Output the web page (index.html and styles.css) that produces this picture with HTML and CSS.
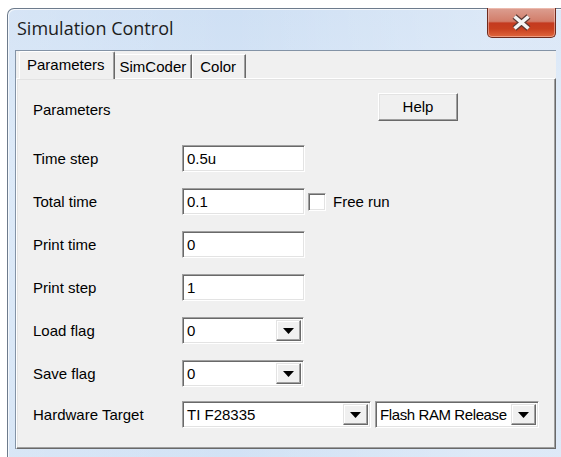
FILE: index.html
```html
<!DOCTYPE html>
<html lang="en">
<head>
<meta charset="utf-8">
<title>Simulation Control</title>
<link rel="stylesheet" href="styles.css">
</head>
<body>
  <div class="window">
    <div class="titlebar">
      <span class="title">Simulation Control</span>
      <button class="close" aria-label="Close">
        <svg width="21" height="17" viewBox="0 0 21 17">
          <path d="M3.5 2.5 L17.5 14.5 M17.5 2.5 L3.5 14.5" stroke="#5b3a34" stroke-width="6" fill="none"/>
          <path d="M3.5 2.5 L17.5 14.5 M17.5 2.5 L3.5 14.5" stroke="#f4f4f4" stroke-width="3.6" fill="none"/>
        </svg>
      </button>
    </div>

    <div class="client">
      <div class="tabs">
        <div class="tab active">Parameters</div>
        <div class="tab">SimCoder</div>
        <div class="tab tab-last">Color</div>
      </div>

      <div class="panel">
        <div class="head">
          <span class="head-title">Parameters</span>
          <button class="btn">Help</button>
        </div>

        <div class="form">
          <div class="row">
            <span class="label">Time step</span>
            <div class="field">0.5u</div>
          </div>
          <div class="row">
            <span class="label">Total time</span>
            <div class="field">0.1</div>
            <span class="check"></span>
            <span class="check-label">Free run</span>
          </div>
          <div class="row">
            <span class="label">Print time</span>
            <div class="field">0</div>
          </div>
          <div class="row">
            <span class="label">Print step</span>
            <div class="field">1</div>
          </div>
          <div class="row">
            <span class="label">Load flag</span>
            <div class="combo">
              <span class="value">0</span>
              <span class="arrow"><svg width="11" height="6" viewBox="0 0 11 6"><path d="M0 0 H11 L5.5 6 Z" fill="#000"/></svg></span>
            </div>
          </div>
          <div class="row">
            <span class="label">Save flag</span>
            <div class="combo">
              <span class="value">0</span>
              <span class="arrow"><svg width="11" height="6" viewBox="0 0 11 6"><path d="M0 0 H11 L5.5 6 Z" fill="#000"/></svg></span>
            </div>
          </div>
          <div class="row row-last">
            <span class="label">Hardware Target</span>
            <div class="combo combo-wide">
              <span class="value">TI F28335</span>
              <span class="arrow"><svg width="11" height="6" viewBox="0 0 11 6"><path d="M0 0 H11 L5.5 6 Z" fill="#000"/></svg></span>
            </div>
            <div class="combo combo-mode">
              <span class="value">Flash RAM Release</span>
              <span class="arrow"><svg width="11" height="6" viewBox="0 0 11 6"><path d="M0 0 H11 L5.5 6 Z" fill="#000"/></svg></span>
            </div>
          </div>
        </div>
      </div>
    </div>
  </div>
</body>
</html>
```

FILE: styles.css
```css
* {
  box-sizing: border-box;
}

html,
body {
  margin: 0;
  height: 100%;
}

body {
  background: #ffffff;
  padding: 8px 0 0 7px;
  overflow: hidden;
  font-family: "Liberation Sans", Arial, sans-serif;
  font-size: 15px;
  color: #000;
}

/* Aero-style window frame */
.window {
  width: 560px;
  height: 470px;
  border: 1px solid #6d7b8c;
  border-bottom: none;
  border-radius: 7px 7px 0 0;
  background:
    linear-gradient(90deg, rgba(255, 255, 255, 0.15), rgba(255, 255, 255, 0) 40%, rgba(255, 255, 255, 0.25) 85%),
    linear-gradient(180deg, #cfe0f4 0%, #d7e6f7 30%, #d2e2f5 100%);
  box-shadow: inset 1px 1px 0 rgba(255, 255, 255, 0.75);
  padding: 0 0 0 7px;
  display: flex;
  flex-direction: column;
}

.titlebar {
  height: 41px;
  display: flex;
  align-items: flex-start;
  justify-content: space-between;
}

.title {
  font-family: "Open Sans", "Noto Sans", sans-serif;
  font-size: 18px;
  line-height: 22px;
  color: #1c1c1c;
  padding: 8px 0 0 2px;
}

.close {
  width: 69px;
  height: 30px;
  margin: -1px 10px 0 0;
  padding: 0;
  border: 1px solid #6e2a1d;
  border-top: none;
  border-radius: 0 0 5px 5px;
  background: linear-gradient(180deg, #dc9f91 0%, #d27d6a 46%, #c43a1f 52%, #c8401f 72%, #e0663c 100%);
  box-shadow: inset 0 0 0 1px rgba(255, 220, 210, 0.45);
  display: flex;
  align-items: center;
  justify-content: center;
}

.close svg {
  display: block;
}

/* Client area with tab control */
.client {
  width: 541px;
  height: 399px;
  background: #f0f0f0;
  border-left: 1px solid #8393a6;
  border-top: 1px solid #8393a6;
  display: flex;
  flex-direction: column;
}

.tabs {
  height: 27px;
  padding-left: 3px;
  display: flex;
  align-items: flex-end;
  position: relative;
  z-index: 1;
}

.tab {
  height: 24px;
  padding: 0 5px 0 5px;
  border-top: 1px solid #ffffff;
  border-left: 1px solid #ffffff;
  border-right: 1px solid #696969;
  box-shadow: inset -1px 0 0 #a0a0a0;
  display: flex;
  align-items: center;
  white-space: nowrap;
}

.tab.active {
  height: 28px;
  margin-bottom: -1px;
  padding: 0 9px 2px 7px;
  background: #f0f0f0;
  border-radius: 2px 2px 0 0;
}

.tab.active + .tab {
  border-left: none;
}

.tab-last {
  padding: 0 9px 0 7px;
}

.panel {
  flex: 1;
  border-top: 1px solid #ffffff;
  border-left: 1px solid #ffffff;
  border-right: 1px solid #696969;
  border-bottom: 1px solid #696969;
  box-shadow: inset -1px -1px 0 #a0a0a0, inset 1px 1px 0 #e3e3e3;
  padding: 14px 0 0 16px;
}

.head {
  width: 425px;
  height: 28px;
  display: flex;
  align-items: center;
  justify-content: space-between;
}

.head-title {
  padding-top: 4px;
}

/* Classic raised controls */
.btn {
  width: 80px;
  height: 28px;
  padding: 0 0 2px;
  font: inherit;
  color: #000;
  background: #f0f0f0;
  border: 1px solid;
  border-color: #ffffff #696969 #696969 #ffffff;
  box-shadow: inset -1px -1px 0 #a0a0a0, inset 1px 1px 0 #e3e3e3;
}

.form {
  margin-top: 24px;
  display: flex;
  flex-direction: column;
  gap: 16px;
}

.row {
  height: 27px;
  display: flex;
  align-items: center;
}

.row-last {
  margin-top: -2px;
}

.label {
  width: 149px;
  flex: none;
}

/* Classic sunken edit boxes */
.field,
.combo,
.check {
  background: #ffffff;
  border: 1px solid;
  border-color: #a0a0a0 #ffffff #ffffff #a0a0a0;
  box-shadow: inset 1px 1px 0 #696969, inset -1px -1px 0 #e3e3e3;
}

.field {
  width: 123px;
  height: 27px;
  padding: 0 0 1px 4px;
  display: flex;
  align-items: center;
}

.check {
  width: 18px;
  height: 18px;
  margin-left: 3px;
}

.check-label {
  margin-left: 7px;
}

.combo {
  width: 122px;
  height: 27px;
  padding: 2px;
  display: flex;
  align-items: stretch;
}

.combo .value {
  flex: 1;
  min-width: 0;
  padding: 0 0 1px 2px;
  display: flex;
  align-items: center;
  white-space: nowrap;
  overflow: hidden;
}

.combo .arrow {
  width: 25px;
  flex: none;
  background: #f0f0f0;
  border: 1px solid;
  border-color: #e3e3e3 #696969 #696969 #e3e3e3;
  box-shadow: inset -1px -1px 0 #a0a0a0, inset 1px 1px 0 #ffffff;
  display: flex;
  align-items: center;
  justify-content: center;
  padding-top: 1px;
}

.combo .arrow svg {
  display: block;
}

.combo-wide {
  width: 189px;
}

.combo-mode {
  width: 164px;
  margin-left: 4px;
}

.combo-mode .value {
  letter-spacing: -0.4px;
}
```
